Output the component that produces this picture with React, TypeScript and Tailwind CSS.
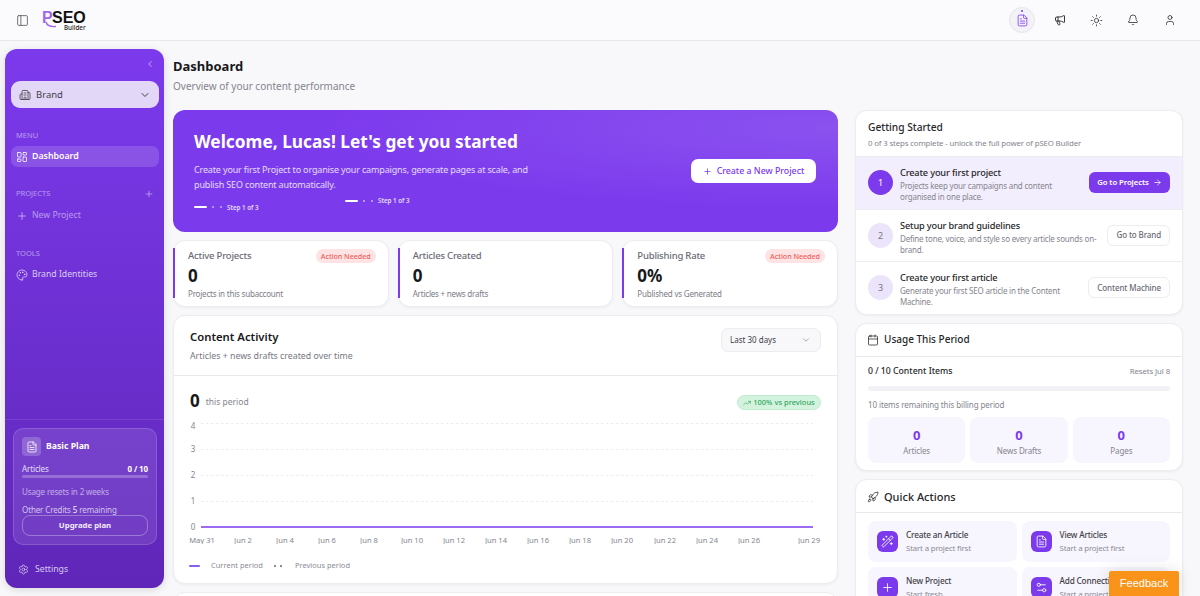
import React from "react";
import {
  PanelLeft, FileText, Megaphone, Sun, Bell, User, ChevronLeft, ChevronDown, Building2,
  LayoutDashboard, Plus, Palette, Settings, Calendar, Rocket, WandSparkles, Settings2,
  TrendingUp, ArrowRight,
} from "lucide-react";

function Dots({ className = "" }: { className?: string }) {
  return (
    <div className={`flex items-center ${className}`}>
      <span className="w-[13px] h-[2px] rounded-full bg-white" />
      <span className="w-[2px] h-[2px] rounded-full bg-white/60 ml-[5px]" />
      <span className="w-[2px] h-[2px] rounded-full bg-white/60 ml-[6px]" />
      <span className="text-[6.2px] font-semibold text-white/80 ml-[5px]">Step 1 of 3</span>
    </div>
  );
}

function Stat({ label, value, sub, badge }: { label: string; value: string; sub: string; badge?: boolean }) {
  return (
    <div className="relative flex-1 h-[67px] rounded-[12px] bg-white border border-[#ececf1] shadow-[0_1px_3px_rgba(0,0,0,0.05)] pl-[14px] pr-[12px] pt-[8px]">
      <span className="absolute left-[-1px] top-[7px] w-[2px] h-[50px] bg-[#7c3aed]" />
      <div className="flex items-center justify-between h-[14px]">
        <span className="text-[9.5px] tracking-[-0.2px] font-medium text-[#6b6b75]">{label}</span>
        {badge && (
          <span className="rounded-full bg-[#fde3e3] text-[#ee5f5f] text-[7.2px] tracking-[-0.05px] font-medium px-[5px] h-[14px] flex items-center">Action Needed</span>
        )}
      </div>
      <div className="text-[17px] leading-[20px] mt-[3px] font-bold text-[#18181b]">{value}</div>
      <div className="text-[8px] tracking-[-0.2px] leading-[12px] mt-[2px] text-[#7c7c86]">{sub}</div>
    </div>
  );
}

function Step({ n, title, desc, action, active }: { n: number; title: string; desc: string; action: React.ReactNode; active?: boolean }) {
  return (
    <div className={`flex items-center h-[52.5px] pl-[12px] pr-[12px] border-t border-[#ececf1] ${active ? "bg-[#f3eefd]" : ""}`}>
      <span className={`w-[25px] h-[25px] rounded-full shrink-0 flex items-center justify-center text-[9px] ${active ? "bg-[#7c3aed] text-white" : "bg-[#ebe4fa] text-[#77777f]"}`}>{n}</span>
      <div className="ml-[7px] flex-1 min-w-0 pr-[4px] pt-[3px]">
        <div className="text-[9.2px] tracking-[-0.15px] leading-[13px] font-medium text-[#27272a]">{title}</div>
        <div className="text-[8px] tracking-[-0.2px] leading-[11px] text-[#85858e] mt-[1px]">{desc}</div>
      </div>
      {action}
    </div>
  );
}

function OutlineBtn({ children }: { children: React.ReactNode }) {
  return (
    <button className="shrink-0 h-[21px] px-[8px] rounded-[6px] bg-white border border-[#ececf1] text-[8px] tracking-[-0.12px] font-medium text-[#6b6b75] whitespace-nowrap">{children}</button>
  );
}

function Tile({ value, label }: { value: string; label: string }) {
  return (
    <div className="flex-1 h-[46px] rounded-[8px] bg-[#f7f5fe] flex flex-col items-center justify-center pt-[3px]">
      <span className="text-[13px] leading-[17px] font-bold text-[#7c3aed]">{value}</span>
      <span className="text-[8px] tracking-[-0.1px] leading-[12px] text-[#85858e] mt-[1px]">{label}</span>
    </div>
  );
}

function Quick({ icon, title, sub }: { icon: React.ReactNode; title: string; sub: string }) {
  return (
    <div className="flex-1 min-w-0 h-[41px] rounded-[8px] bg-[#f7f5fe] flex items-center pl-[9px] overflow-hidden">
      <span className="w-[21px] h-[21px] rounded-[6px] bg-[#7c3aed] text-white flex items-center justify-center shrink-0">{icon}</span>
      <div className="ml-[8px] whitespace-nowrap">
        <div className="text-[8.2px] tracking-[-0.15px] leading-[12px] font-medium text-[#3f3f46]">{title}</div>
        <div className="text-[7.8px] tracking-[-0.15px] leading-[12px] mt-[1px] text-[#8b8b94]">{sub}</div>
      </div>
    </div>
  );
}

function Chart() {
  const ys: [number, number, number][] = [[4, 423, 429], [3, 449, 452], [2, 475, 478], [1, 501, 504]];
  const xs: [string, number][] = [["May 31", 202], ["Jun 2", 243], ["Jun 4", 285], ["Jun 6", 327], ["Jun 8", 369], ["Jun 10", 412], ["Jun 12", 454], ["Jun 14", 496], ["Jun 16", 538], ["Jun 18", 580], ["Jun 20", 622], ["Jun 22", 665], ["Jun 24", 707], ["Jun 26", 749], ["Jun 29", 809]];
  return (
    <svg width="665" height="126" viewBox="173 418 665 126" className="block -ml-[1px]" style={{ fontFamily: '"Noto Sans", sans-serif' }}>
      {ys.map(([l, y, b]) => (
        <g key={l}>
          <line x1="201" x2="813" y1={y + 0.5} y2={y + 0.5} stroke="#e7e7ea" strokeWidth="0.8" strokeDasharray="2.5 2.5" />
          <text x="193" y={b} textAnchor="middle" fontSize="8" fill="#85858e">{l}</text>
        </g>
      ))}
      <text x="193" y="530" textAnchor="middle" fontSize="8" fill="#85858e">0</text>
      <line x1="201" x2="813" y1="527" y2="527" stroke="#7c3aed" strokeWidth="1.4" />
      {xs.map(([l, x]) => (
        <text key={l} x={x} y="543" textAnchor="middle" fontSize="7.6" fill="#85858e">{l}</text>
      ))}
    </svg>
  );
}

export default function App() {
  return (
    <div className="relative w-[1200px] h-[596px] overflow-hidden bg-[#f8f8fb] text-[#18181b] font-['Noto_Sans',sans-serif]">
      <header className="h-[41px] bg-[#fbfbfd] border-b border-[#e7e7ea] flex items-center">
        <PanelLeft size={13} strokeWidth={1.5} className="ml-[16px] text-[#55555c]" />
        <div className="relative ml-[13px] w-[46px] h-[26px] shrink-0">
          <span className="absolute left-0 top-[5px] text-[16px] leading-[12px] font-bold text-[#a066ee] font-['Liberation_Sans',sans-serif]">P</span>
          <span className="absolute left-[10px] top-[5px] text-[16px] leading-[12px] font-bold text-[#111] font-['Liberation_Sans',sans-serif]">SEO</span>
          <span className="absolute left-[22px] top-[18px] text-[6.3px] leading-[6px] font-medium text-[#222]">Builder</span>
          <svg className="absolute left-[3px] top-[14px]" width="12" height="8" viewBox="0 0 12 8" fill="none"><path d="M1 1 C2 5 6 6 11 5.5" stroke="#a066ee" strokeWidth="1.4" /></svg>
        </div>
        <div className="ml-auto flex items-center pr-[24px]">
          <span className="relative w-[26px] h-[26px] rounded-full bg-[#f3f2f8] border border-[#e7e7ea] flex items-center justify-center">
            <span className="absolute top-[2px] w-[2px] h-[2px] rounded-full bg-[#7c3aed]" />
            <FileText size={13} strokeWidth={1.5} className="text-[#7c3aed]" />
          </span>
          <Megaphone size={12} strokeWidth={1.8} className="ml-[19px] text-[#222]" />
          <Sun size={13} strokeWidth={1.5} className="ml-[24px] text-[#333]" />
          <Bell size={12} strokeWidth={1.5} className="ml-[24px] text-[#222]" />
          <User size={12} strokeWidth={1.5} className="ml-[25px] text-[#222]" />
        </div>
      </header>

      <div className="flex pl-[5px]">
        <aside className="w-[159px] h-[539px] mt-[8px] shrink-0 rounded-[12px] bg-gradient-to-b from-[#7c3aed] to-[#5f26b8] shadow-[0_2px_8px_rgba(0,0,0,0.12)] flex flex-col pl-[6px] pr-[5px]">
          <div className="flex justify-end pr-[4px] pt-[10px] h-[32px]">
            <ChevronLeft size={10} className="text-white/70" />
          </div>
          <div className="h-[27px] rounded-[9px] bg-[#e3d7f8] flex items-center pl-[8px] pr-[8px] text-[#3f3f46]">
            <Building2 size={12} strokeWidth={1.6} />
            <span className="ml-[5px] text-[9.5px] pt-[1px]">Brand</span>
            <ChevronDown size={12} className="ml-auto" />
          </div>
          <div className="text-[7.5px] leading-[12px] text-white/50 pl-[5px] mt-[21px]">MENU</div>
          <div className="h-[21px] mt-[5px] rounded-[7px] bg-white/15 flex items-center pl-[5px] text-white">
            <LayoutDashboard size={12} strokeWidth={1.6} />
            <span className="ml-[4px] text-[8.8px] font-semibold pt-[1px]">Dashboard</span>
          </div>
          <div className="flex items-center justify-between text-white/50 pl-[5px] pr-[5px] mt-[21px] h-[12px]">
            <span className="text-[7.5px]">PROJECTS</span>
            <Plus size={10} />
          </div>
          <div className="h-[21px] mt-[5px] flex items-center pl-[5px] text-white/50">
            <Plus size={12} />
            <span className="ml-[4px] text-[8.7px] pt-[1px]">New Project</span>
          </div>
          <div className="text-[7.5px] leading-[12px] text-white/50 pl-[5px] mt-[21px]">TOOLS</div>
          <div className="h-[21px] mt-[5px] flex items-center pl-[5px] text-white/75">
            <Palette size={12} strokeWidth={1.6} />
            <span className="ml-[4px] text-[8.7px] pt-[1px]">Brand Identities</span>
          </div>
          <div className="mt-auto -ml-[6px] -mr-[5px] border-t border-white/10 px-[8px] pt-[8px] pb-[12px]">
            <div className="h-[117px] w-[144px] rounded-[10px] bg-white/10 border border-white/15 px-[8px] pt-[8px]">
              <div className="flex items-center h-[19px]">
                <span className="w-[19px] h-[19px] rounded-[4px] bg-white/20 flex items-center justify-center text-white"><FileText size={12} strokeWidth={1.6} /></span>
                <span className="ml-[5px] text-[8.7px] font-bold text-white">Basic Plan</span>
              </div>
              <div className="flex justify-between mt-[7px] text-[8px] tracking-[-0.12px] leading-[12px] text-white/80">
                <span>Articles</span>
                <span className="font-bold text-white">0 / 10</span>
              </div>
              <div className="h-[3px] rounded-full bg-white/25" />
              <div className="text-[8px] tracking-[-0.12px] leading-[12px] text-white/55 mt-[7.5px]">Usage resets in 2 weeks</div>
              <div className="text-[8px] tracking-[-0.12px] leading-[12px] text-white/70 mt-[6.5px]">Other Credits <span className="text-white/90">5</span> remaining</div>
              <button className="w-full h-[21px] -mt-[1px] block rounded-[8px] border border-white/30 text-[7.8px] font-bold text-white/90">Upgrade plan</button>
            </div>
            <div className="flex items-center pl-[5px] mt-[18px] h-[13px] text-white/75">
              <Settings size={11} strokeWidth={1.6} />
              <span className="ml-[6px] text-[8.7px]">Settings</span>
            </div>
          </div>
        </aside>

        <main className="ml-[9px] w-[1010px] shrink-0">
          <div className="pt-[16px] h-[69px]">
            <h1 className="text-[13px] leading-[18px] font-bold text-[#18181b]">Dashboard</h1>
            <p className="text-[10px] leading-[14px] mt-[4px] text-[#85858e]">Overview of your content performance</p>
          </div>
          <div className="flex gap-[17px] items-start">
            <div className="w-[665px] shrink-0 flex flex-col gap-[8px]">
              <section className="relative h-[122px] rounded-[12px] bg-[radial-gradient(ellipse_at_100%_15%,#8b52ef_0%,#7c3aed_55%)] flex items-center pl-[21px] pr-[22px]">
                <div className="w-[340px] shrink-0 pt-[2px]">
                  <h2 className="text-[17.3px] leading-[24px] font-bold text-white whitespace-nowrap -mt-[2px]">Welcome, Lucas! Let's get you started</h2>
                  <p className="text-[9px] tracking-[-0.15px] leading-[15px] mt-[8px] text-white/80">Create your first Project to organise your campaigns, generate pages at scale, and publish SEO content automatically.</p>
                  <Dots className="mt-[11px]" />
                </div>
                <Dots className="absolute left-[172px] top-[86px]" />
                <button className="ml-auto h-[24px] w-[125px] rounded-[7px] bg-white text-[#7c3aed] text-[8.8px] font-medium flex items-center justify-center gap-[5px] pt-[1px]">
                  <Plus size={9} /> Create a New Project
                </button>
              </section>

              <div className="flex gap-[9px]">
                <Stat label="Active Projects" value="0" sub="Projects in this subaccount" badge />
                <Stat label="Articles Created" value="0" sub="Articles + news drafts" />
                <Stat label="Publishing Rate" value="0%" sub="Published vs Generated" badge />
              </div>

              <section className="h-[269px] rounded-[12px] bg-white border border-[#ececf1] shadow-[0_1px_3px_rgba(0,0,0,0.05)]">
                <div className="h-[60px] border-b border-[#e9e9ec] flex items-start justify-between pl-[16px] pr-[16px] pt-[12px]">
                  <div>
                    <div className="text-[11.3px] leading-[18px] font-semibold text-[#18181b]">Content Activity</div>
                    <div className="text-[8.8px] leading-[12px] mt-[4px] text-[#77777f]">Articles + news drafts created over time</div>
                  </div>
                  <div className="w-[100px] h-[24px] rounded-[7px] bg-[#f8f8fb] border border-[#ececf1] flex items-center justify-between px-[8px] text-[8px] text-[#3f3f46]">
                    Last 30 days <ChevronDown size={10} className="text-[#9a9aa2] mr-[1px]" />
                  </div>
                </div>
                <div className="flex items-start justify-between pl-[16px] pr-[16px] pt-[14px] h-[42px]">
                  <div className="flex items-center h-[22px]">
                    <span className="text-[17px] font-bold text-[#18181b]">0</span>
                    <span className="ml-[6px] text-[8.5px] text-[#85858e] pt-[3px]">this period</span>
                  </div>
                  <span className="h-[15px] w-[84px] mt-[5px] rounded-full bg-[#d3f3df] border border-[#bdeccf] text-[#35a862] text-[7.5px] font-medium flex items-center justify-center gap-[2px]">
                    <TrendingUp size={8} /> 100% vs previous
                  </span>
                </div>
                <Chart />
                <div className="flex items-center text-[7.5px] text-[#8b8b94] pl-[15px] mt-[16px]">
                  <span className="w-[11px] h-[2px] bg-[#8b5cf0] rounded-full" />
                  <span className="ml-[11px]">Current period</span>
                  <span className="w-[2px] h-[2px] bg-[#8b8b94] ml-[11px]" />
                  <span className="w-[2px] h-[2px] bg-[#8b8b94] ml-[4px]" />
                  <span className="ml-[13px]">Previous period</span>
                </div>
              </section>

              <section className="h-[40px] rounded-[12px] bg-white border border-[#ececf1]" />
            </div>

            <div className="w-[328px] shrink-0 flex flex-col gap-[8px]">
              <section className="h-[205px] rounded-[12px] bg-white border border-[#ececf1] shadow-[0_1px_3px_rgba(0,0,0,0.05)] overflow-hidden">
                <div className="h-[45px] pl-[12px] pt-[8px]">
                  <div className="text-[10.2px] leading-[16px] font-medium text-[#27272a]">Getting Started</div>
                  <div className="text-[7.8px] tracking-[-0.13px] leading-[12px] mt-[2px] text-[#85858e]">0 of 3 steps complete - unlock the full power of pSEO Builder</div>
                </div>
                <Step n={1} active title="Create your first project" desc="Projects keep your campaigns and content organised in one place." action={
                  <button className="shrink-0 h-[21px] w-[81px] rounded-[6px] bg-[#7c3aed] text-white text-[7.8px] tracking-[-0.1px] font-semibold flex items-center justify-center gap-[4px] whitespace-nowrap">Go to Projects <ArrowRight size={9} /></button>
                } />
                <Step n={2} title="Setup your brand guidelines" desc="Define tone, voice, and style so every article sounds on-brand." action={<OutlineBtn>Go to Brand</OutlineBtn>} />
                <Step n={3} title="Create your first article" desc="Generate your first SEO article in the Content Machine." action={<OutlineBtn>Content Machine</OutlineBtn>} />
              </section>

              <section className="h-[148px] rounded-[12px] bg-white border border-[#ececf1] shadow-[0_1px_3px_rgba(0,0,0,0.05)]">
                <div className="h-[33px] border-b border-[#e9e9ec] flex items-center pl-[11px] pb-[1px]">
                  <Calendar size={12} strokeWidth={1.5} className="text-[#27272a]" />
                  <span className="ml-[5px] text-[10px] font-medium text-[#27272a]">Usage This Period</span>
                </div>
                <div className="px-[12px] pt-[9px]">
                  <div className="flex justify-between items-center h-[12px]">
                    <span className="text-[8.7px] font-medium text-[#27272a]">0 / 10 Content Items</span>
                    <span className="text-[7.8px] tracking-[-0.1px] text-[#85858e]">Resets Jul 8</span>
                  </div>
                  <div className="h-[5px] mt-[8px] rounded-full bg-[#f2f2f6]" />
                  <div className="text-[8px] tracking-[-0.1px] leading-[12px] mt-[8px] text-[#85858e]">10 items remaining this billing period</div>
                  <div className="flex gap-[5px] mt-[6px]">
                    <Tile value="0" label="Articles" />
                    <Tile value="0" label="News Drafts" />
                    <Tile value="0" label="Pages" />
                  </div>
                </div>
              </section>

              <section className="h-[140px] rounded-[12px] bg-white border border-[#ececf1] shadow-[0_1px_3px_rgba(0,0,0,0.05)]">
                <div className="h-[33px] border-b border-[#e9e9ec] flex items-center pl-[11px] pt-[2px]">
                  <Rocket size={12} strokeWidth={1.5} className="text-[#27272a]" />
                  <span className="ml-[5px] text-[11px] font-medium text-[#27272a]">Quick Actions</span>
                </div>
                <div className="px-[12px] pt-[8px] flex flex-col gap-[5px]">
                  <div className="flex gap-[5px]">
                    <Quick icon={<WandSparkles size={13} strokeWidth={1.6} />} title="Create an Article" sub="Start a project first" />
                    <Quick icon={<FileText size={13} strokeWidth={1.6} />} title="View Articles" sub="Start a project first" />
                  </div>
                  <div className="flex gap-[5px]">
                    <Quick icon={<Plus size={13} strokeWidth={1.6} />} title="New Project" sub="Start fresh" />
                    <Quick icon={<Settings2 size={13} strokeWidth={1.6} />} title="Add Connection" sub="Start a project first" />
                  </div>
                </div>
              </section>
            </div>
          </div>
        </main>
      </div>

      <button className="absolute left-[1109px] top-[571px] w-[70px] h-[25px] bg-[#f9931a] text-white text-[11px] font-medium font-['Liberation_Sans',sans-serif] shadow-[0_0_16px_rgba(0,0,0,0.12)] rounded-t-[2px]">Feedback</button>
    </div>
  );
}
